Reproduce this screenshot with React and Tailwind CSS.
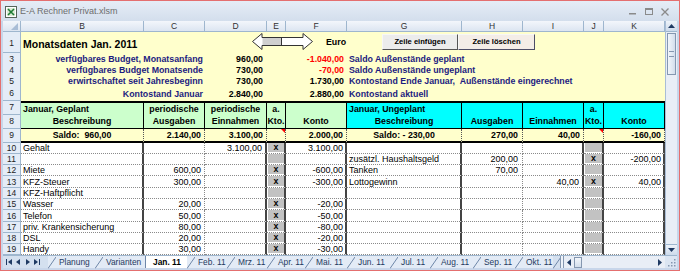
import React from 'react';

const COLS = 'grid grid-cols-[18px_123px_61px_62px_19px_61px_115px_61px_61px_20px_61px]';
const HDR = 'bg-[#e4ecf7] border-r border-b border-[#9eb6ce] text-[8.5px] text-[#1e1e1e]';
const SOLID = 'border-r-2 border-r-[#444]';
const DOTTED = '[border-right:1px_dotted_#8a8a8a]';
const BASE = 'flex items-center whitespace-nowrap [border-bottom:1px_dotted_#8a8a8a]';

function RowNum({ n, low }) {
  return (
    <div className={`${HDR} flex justify-center ${low ? 'items-end pb-[2px]' : 'items-center'}`}>{n}</div>
  );
}

function ColHeader() {
  const letters = ['B', 'C', 'D', 'E', 'F', 'G', 'H', 'I', 'J', 'K'];
  return (
    <div className={`${COLS} h-[11px]`}>
      <div className="flex items-end justify-end pr-[2px] pb-[1px] border-r border-b border-[#9eb6ce] bg-linear-to-b from-[#f3f6fb] to-[#dce5f1]">
        <svg width="7" height="7"><polygon points="7,0 7,7 0,7" fill="#a9bdd6" /></svg>
      </div>
      {letters.map((l) => (
        <div key={l} className="flex items-center justify-center border-r border-b border-[#9eb6ce] bg-linear-to-b from-[#f3f6fb] to-[#dce5f1] text-[8.5px] leading-none text-[#303030]">
          {l}
        </div>
      ))}
    </div>
  );
}

function DoubleArrow() {
  return (
    <svg width="61" height="17" className="mt-[1px]">
      <polygon points="0.5,8.5 10,0.5 10,4.5 51,4.5 51,0.5 60.5,8.5 51,16.5 51,12.5 10,12.5 10,16.5" fill="#fff" stroke="#333" />
      <rect x="10.5" y="5" width="18.5" height="7" fill="#cfcfcf" />
      <line x1="29.5" y1="4.5" x2="29.5" y2="12.5" stroke="#333" />
    </svg>
  );
}

function TopRow() {
  return (
    <div className={`${COLS} h-[21px]`}>
      <RowNum n="1" low />
      <div className="col-span-10 flex bg-[#ffffcc]">
        <div className="w-[231px] flex items-end pl-[2px] pb-[3px] text-[10.5px] leading-[12px] font-bold">Monatsdaten Jan. 2011</div>
        <DoubleArrow />
        <div className="w-[13px]" />
        <div className="w-[56px] flex items-center text-[8.8px] font-bold">Euro</div>
        <div className="mt-[2px] h-[16px] w-[76px] flex items-center justify-center bg-[#ececec] border border-t-[#f7f7f7] border-l-[#f7f7f7] border-r-[#555] border-b-[#555] text-[7.6px] font-bold">Zeile einfügen</div>
        <div className="mt-[2px] h-[16px] w-[77px] flex items-center justify-center bg-[#f4ede7] border border-t-[#f7f7f7] border-l-[#f7f7f7] border-r-[#4d4d66] border-b-[#4d4d66] text-[7.6px] font-bold">Zeile löschen</div>
      </div>
    </div>
  );
}

const infoRows = [
  { n: '3', h: 'h-[11px]', label: 'verfügbares Budget, Monatsanfang', d: '960,00', f: '-1.040,00', red: true, g: 'Saldo Außenstände geplant' },
  { n: '4', h: 'h-[11px]', label: 'verfügbares Budget Monatsende', d: '730,00', f: '-70,00', red: true, g: 'Saldo Außenstände ungeplant' },
  { n: '5', h: 'h-[11px]', label: 'erwirtschaftet seit Jahresbeginn', d: '730,00', f: '1.730,00', g: 'Kontostand Ende Januar,  Außenstände eingerechnet' },
  { n: '6', h: 'h-[15px]', label: 'Kontostand Januar', d: '2.840,00', f: '2.880,00', g: 'Kontostand aktuell', low: true },
];

function InfoRow({ r }) {
  const cell = `flex ${r.low ? 'items-end pb-[1px]' : 'items-center'} bg-[#ffffcc] text-[8.8px] leading-[11px] font-bold whitespace-pre`;
  return (
    <div className={`${COLS} ${r.h}`}>
      <RowNum n={r.n} />
      <div className={`${cell} col-span-2 justify-end pr-[2px] text-[#1c1c80]`}>{r.label}</div>
      <div className={`${cell} justify-end pr-[4px]`}>{r.d}</div>
      <div className={cell} />
      <div className={`${cell} justify-end pr-[3px] ${r.red ? 'text-[#ff0000]' : 'text-black'}`}>{r.f}</div>
      <div className={`${cell} col-span-5 pl-[2px] text-[#1c1c80]`}>{r.g}</div>
    </div>
  );
}

function TableHeader() {
  const cell = 'flex flex-col border-t-2 border-t-black border-b border-b-black border-r border-r-black font-bold text-[8.8px] leading-[12px] whitespace-nowrap';
  const green = `${cell} bg-[#ccffcc]`;
  const cyan = `${cell} bg-[#00ffff]`;
  return (
    <div className={`${COLS} h-[28px]`}>
      <div className="flex flex-col">
        <div className={`${HDR} flex items-center justify-center h-[14px]`}>7</div>
        <div className={`${HDR} flex items-center justify-center flex-1`}>8</div>
      </div>
      <div className={green}>
        <span className="pl-[2px]">Januar, Geplant</span>
        <span className="text-center">Beschreibung</span>
      </div>
      <div className={`${green} items-center`}>
        <span>periodische</span>
        <span>Ausgaben</span>
      </div>
      <div className={`${green} items-center`}>
        <span>periodische</span>
        <span>Einnahmen</span>
      </div>
      <div className={`${green} items-center`}>
        <span>a.</span>
        <span>Kto.</span>
      </div>
      <div className={`${green} items-center`}>
        <span>&nbsp;</span>
        <span>Konto</span>
      </div>
      <div className={cyan}>
        <span className="pl-[2px]">Januar, Ungeplant</span>
        <span className="text-center">Beschreibung</span>
      </div>
      <div className={`${cyan} items-center`}>
        <span>&nbsp;</span>
        <span>Ausgaben</span>
      </div>
      <div className={`${cyan} items-center`}>
        <span>&nbsp;</span>
        <span>Einnahmen</span>
      </div>
      <div className={`${cyan} items-center`}>
        <span>a.</span>
        <span>Kto.</span>
      </div>
      <div className={`${cyan} items-center`}>
        <span>&nbsp;</span>
        <span>Konto</span>
      </div>
    </div>
  );
}

function CommentMark() {
  return (
    <div className="flex justify-end">
      <svg width="4" height="4"><polygon points="0,0 4,0 4,4" fill="#ff0000" /></svg>
    </div>
  );
}

function SaldoRow() {
  const cell = 'flex items-center bg-[#ffffcc] border-b-2 border-b-black [border-right:1px_dotted_#555] font-bold text-[8.8px] leading-[10px] whitespace-pre';
  return (
    <div className={`${COLS} h-[14px]`}>
      <RowNum n="9" />
      <div className={`${cell} justify-center`}>Saldo:  960,00</div>
      <div className={`${cell} justify-end pr-[3px]`}>2.140,00</div>
      <div className={`${cell} justify-end pr-[3px]`}>3.100,00</div>
      <div className="flex flex-col bg-[#ffffcc] border-b-2 border-b-black [border-right:1px_dotted_#555]"><CommentMark /></div>
      <div className={`${cell} justify-end pr-[3px]`}>2.000,00</div>
      <div className={`${cell} justify-center`}>Saldo: - 230,00</div>
      <div className={`${cell} justify-end pr-[4px]`}>270,00</div>
      <div className={`${cell} justify-end pr-[3px]`}>40,00</div>
      <div className="flex flex-col bg-[#ffffcc] border-b-2 border-b-black [border-right:1px_dotted_#555]"><CommentMark /></div>
      <div className={`${cell} justify-end pr-[3px]`}>-160,00</div>
    </div>
  );
}

const left = [
  ['Gehalt', '', '3.100,00', 'x', '3.100,00'],
  ['', '', '', '', ''],
  ['Miete', '600,00', '', 'x', '-600,00'],
  ['KFZ-Steuer', '300,00', '', 'x', '-300,00'],
  ['KFZ-Haftpflicht', '', '', '', ''],
  ['Wasser', '20,00', '', 'x', '-20,00'],
  ['Telefon', '50,00', '', 'x', '-50,00'],
  ['priv. Krankensicherung', '80,00', '', 'x', '-80,00'],
  ['DSL', '20,00', '', 'x', '-20,00'],
  ['Handy', '30,00', '', 'x', '-30,00'],
];

const right = [
  ['', '', '', '', ''],
  ['zusätzl. Haushaltsgeld', '200,00', '', 'x', '-200,00'],
  ['Tanken', '70,00', '', '', ''],
  ['Lottogewinn', '', '40,00', 'x', '40,00'],
  ['', '', '', '', ''],
  ['', '', '', '', ''],
  ['', '', '', '', ''],
  ['', '', '', '', ''],
  ['', '', '', '', ''],
  ['', '', '', '', ''],
];

const heights = ['h-[11px]', 'h-[11px]', 'h-[11px]', 'h-[12px]', 'h-[11px]', 'h-[11px]', 'h-[12px]', 'h-[11px]', 'h-[11px]', 'h-[11px]'];

function Check({ on }) {
  return (
    <div className={`flex ${SOLID} [border-bottom:1px_dotted_#8a8a8a]`}>
      <div className="ml-[1px] mb-[1px] flex-1 flex items-center justify-center bg-[#c2c2c2] font-bold text-[8.8px] leading-none">{on}</div>
    </div>
  );
}

function DataRow({ i }) {
  const l = left[i];
  const r = right[i];
  return (
    <div className={`${COLS} ${heights[i]} text-[9px] leading-[10px]`}>
      <RowNum n={String(10 + i)} />
      <div className={`${BASE} ${SOLID} pl-[2px]`}>{l[0]}</div>
      <div className={`${BASE} ${DOTTED} justify-end pr-[3px]`}>{l[1]}</div>
      <div className={`${BASE} ${SOLID} justify-end pr-[3px]`}>{l[2]}</div>
      <Check on={l[3]} />
      <div className={`${BASE} ${SOLID} justify-end pr-[2px]`}>{l[4]}</div>
      <div className={`${BASE} ${SOLID} pl-[2px]`}>{r[0]}</div>
      <div className={`${BASE} ${DOTTED} justify-end pr-[4px]`}>{r[1]}</div>
      <div className={`${BASE} ${SOLID} justify-end pr-[3px]`}>{r[2]}</div>
      <Check on={r[3]} />
      <div className={`${BASE} ${SOLID} justify-end pr-[2px]`}>{r[4]}</div>
    </div>
  );
}

function VScroll() {
  return (
    <div className="w-[12px] flex flex-col bg-[#e9eef6] border-l border-[#a9bdd6]">
      <div className="h-[11px] flex items-center justify-center bg-linear-to-b from-[#eef3fa] to-[#cddaeb] border-b border-[#9eb6ce]">
        <svg width="7" height="4"><polygon points="3.5,0 7,4 0,4" fill="#1f3a63" /></svg>
      </div>
      <div className="mt-[1px] mx-[1px] h-[42px] flex items-center justify-center border border-[#8597b0] bg-linear-to-r from-[#f2f6fb] to-[#d3deec]">
        <div className="w-[5px] h-[6px] border-y border-[#8597b0]" />
      </div>
      <div className="flex-1" />
      <div className="h-[11px] flex items-center justify-center bg-linear-to-b from-[#eef3fa] to-[#cddaeb] border-t border-[#9eb6ce]">
        <svg width="7" height="4"><polygon points="0,0 7,0 3.5,4" fill="#1f3a63" /></svg>
      </div>
    </div>
  );
}

const tabs = [
  { t: 'Planung', w: 'w-[47px]' },
  { t: 'Varianten', w: 'w-[50px]' },
  { t: 'Jan. 11', w: 'w-[42px]', active: true },
  { t: 'Feb. 11', w: 'w-[40px]' },
  { t: 'Mrz. 11', w: 'w-[40px]' },
  { t: 'Apr. 11', w: 'w-[38px]' },
  { t: 'Mai. 11', w: 'w-[42px]' },
  { t: 'Jun. 11', w: 'w-[43px]' },
  { t: 'Jul. 11', w: 'w-[40px]' },
  { t: 'Aug. 11', w: 'w-[43px]' },
  { t: 'Sep. 11', w: 'w-[42px]' },
  { t: 'Okt. 11', w: 'w-[38px]' },
];

function Slash() {
  return (
    <svg width="8" height="13" className="shrink-0">
      <line x1="0" y1="12.5" x2="8" y2="1" stroke="#6f87a8" />
    </svg>
  );
}

function TabBar() {
  return (
    <div className="h-[13px] mx-[2px] flex bg-[#d4e0ef] border-t border-[#9eb6ce] text-[8.4px] leading-none text-[#1f3a60]">
      <div className="w-[45px] flex items-center pl-[2px]">
        <svg width="40" height="8">
          <rect x="1" y="1" width="1" height="6" fill="#1f3a63" />
          <polygon points="7,1 7,7 3,4" fill="#1f3a63" />
          <polygon points="15,1 15,7 11,4" fill="#1f3a63" />
          <polygon points="21,1 21,7 25,4" fill="#1f3a63" />
          <polygon points="29,1 29,7 33,4" fill="#1f3a63" />
          <rect x="34" y="1" width="1" height="6" fill="#1f3a63" />
        </svg>
      </div>
      {tabs.map((tab) =>
        tab.active ? (
          <div key={tab.t} className={`${tab.w} flex items-center pl-[7px] bg-white border-l border-[#6f87a8] font-bold text-black`}>
            {tab.t}
          </div>
        ) : (
          <div key={tab.t} className={`${tab.w} flex items-center bg-[#e3ebf6]`}>
            <Slash />
            <span className="pl-[3px] whitespace-nowrap">{tab.t}</span>
          </div>
        )
      )}
      <div className="w-[7px] flex"><Slash /></div>
      <div className="w-[4px] border-x border-[#8597b0] bg-[#eef3fa]" />
      <div className="w-[101px] flex items-center bg-[#e9eef6]">
        <div className="w-[10px] flex justify-center">
          <svg width="4" height="7"><polygon points="4,0 4,7 0,3.5" fill="#1f3a63" /></svg>
        </div>
        <div className="w-[8px] h-[11px] border border-[#8597b0] bg-linear-to-b from-[#f2f6fb] to-[#d3deec]" />
        <div className="flex-1" />
        <div className="w-[10px] flex justify-center">
          <svg width="4" height="7"><polygon points="0,0 4,3.5 0,7" fill="#1f3a63" /></svg>
        </div>
      </div>
      <div className="w-[12px] flex items-end justify-end bg-[#dbe5f2] pr-[1px] pb-[1px]">
        <svg width="8" height="8">
          <rect x="6" y="0" width="1.5" height="1.5" fill="#8597b0" />
          <rect x="3" y="3" width="1.5" height="1.5" fill="#8597b0" />
          <rect x="6" y="3" width="1.5" height="1.5" fill="#8597b0" />
          <rect x="0" y="6" width="1.5" height="1.5" fill="#8597b0" />
          <rect x="3" y="6" width="1.5" height="1.5" fill="#8597b0" />
          <rect x="6" y="6" width="1.5" height="1.5" fill="#8597b0" />
        </svg>
      </div>
    </div>
  );
}

export default function App() {
  return (
    <div className="w-[680px] h-[271px] flex flex-col border border-[#e46f6f] bg-[#c8d6ea] font-['Liberation_Sans',Arial,sans-serif] overflow-hidden">
      <div className="h-[20px] flex items-center pt-[1px] bg-linear-to-b from-[#e6edf6] to-[#d3deec]">
        <svg width="12" height="12" viewBox="0 0 12 12" className="ml-[4px]">
          <rect x="0.5" y="0.5" width="11" height="11" fill="#fff" stroke="#56645a" />
          <rect x="2" y="2" width="8" height="8" fill="#dcebd6" />
          <path d="M3 3 L9 9 M9 3 L3 9" stroke="#1e7b34" strokeWidth="1.6" />
        </svg>
        <span className="ml-[3px] text-[9px] text-[#6d6d6d]">E-A Rechner Privat.xlsm</span>
        <div className="ml-auto mr-[6px] flex text-[#7a7a7a]">
          <div className="w-[16px] flex justify-center">
            <svg width="8" height="8"><rect x="0" y="5" width="7" height="1.5" fill="#8a8a8a" /></svg>
          </div>
          <div className="w-[16px] flex justify-center">
            <svg width="8" height="8"><rect x="0.5" y="0.5" width="7" height="6" fill="none" stroke="#8a8a8a" /><rect x="0.5" y="0.5" width="7" height="1.5" fill="#8a8a8a" /></svg>
          </div>
          <div className="w-[16px] flex justify-center">
            <svg width="8" height="8"><path d="M0.5 0.5 L7.5 7.5 M7.5 0.5 L0.5 7.5" stroke="#8a8a8a" strokeWidth="1.3" /></svg>
          </div>
        </div>
      </div>
      <div className="flex mx-[2px]">
        <div className="w-[662px] bg-white text-black">
          <ColHeader />
          <TopRow />
          {infoRows.map((r) => (
            <InfoRow key={r.n} r={r} />
          ))}
          <TableHeader />
          <SaldoRow />
          {left.map((_, i) => (
            <DataRow key={i} i={i} />
          ))}
        </div>
        <VScroll />
      </div>
      <TabBar />
    </div>
  );
}
